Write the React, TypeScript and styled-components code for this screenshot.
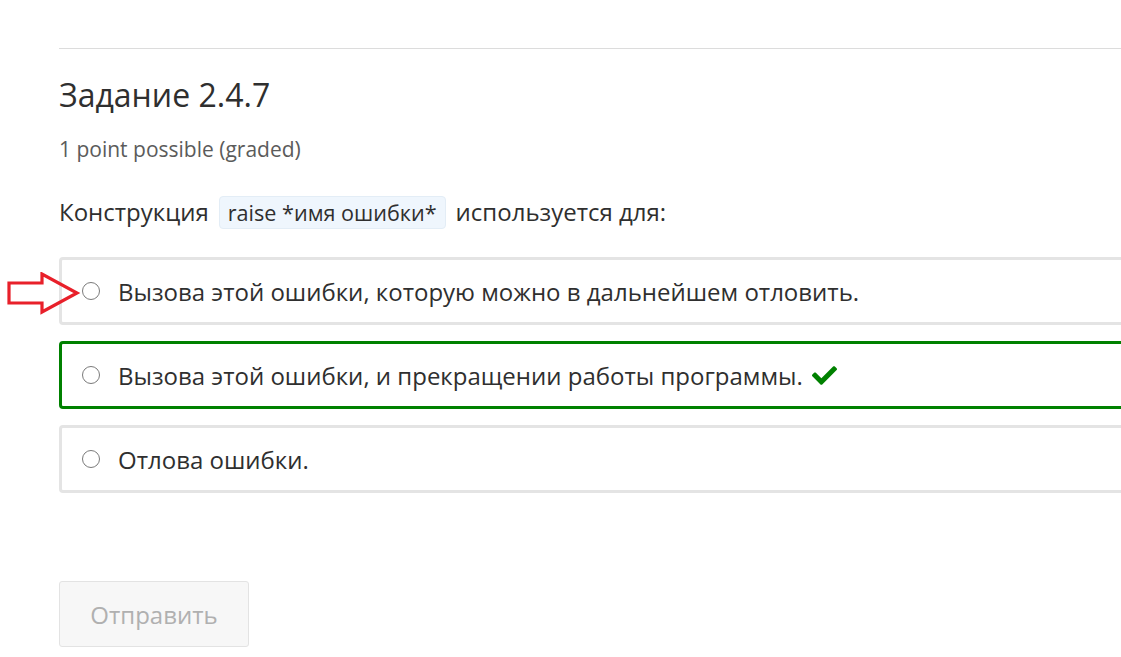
import React from "react";
import styled, { createGlobalStyle } from "styled-components";
import { FaCheck } from "react-icons/fa";

const Global = createGlobalStyle`
  html, body { margin: 0; padding: 0; background: #fff; overflow: hidden; }
  body { font-family: "Open Sans", "Noto Sans", sans-serif; color: #2f2f2f; }
`;

const Page = styled.div`
  width: 1121px;
  height: 657px;
  overflow: hidden;
  position: relative;
  padding-left: 59px;
  box-sizing: border-box;
`;

const Content = styled.div`
  width: 1120px;
  padding-top: 48px;
`;

const Rule = styled.hr`
  margin: 0;
  border: 0;
  border-top: 1px solid #dcdcdc;
`;

const Title = styled.h2`
  margin: 26px 0 0;
  font-size: 32px;
  font-weight: 400;
  line-height: 40px;
  color: #2f2f2f;
`;

const Meta = styled.div`
  margin-top: 20px;
  font-size: 21px;
  line-height: 28px;
  color: #5b5b5b;
`;

const Question = styled.p`
  margin: 32px 0 0;
  font-size: 24px;
  line-height: 34px;
  display: flex;
  align-items: center;
  gap: 10px;
`;

const Code = styled.span`
  display: inline-block;
  background: #eff6fd;
  border: 1px solid #e3edf6;
  border-radius: 4px;
  padding: 0 8px;
  line-height: 31px;
  font-size: 21.6px;
`;

const Options = styled.div`
  margin-top: 28px;
  display: flex;
  flex-direction: column;
  gap: 16px;
  position: relative;
`;

const Option = styled.label<{ $correct?: boolean }>`
  display: flex;
  align-items: center;
  height: 68px;
  box-sizing: border-box;
  border: ${(p) => (p.$correct ? "3px solid #008100" : "3px solid #e4e4e4")};
  border-radius: 4px;
  padding-left: 20px;
  font-size: 24px;
  color: #2f2f2f;
`;

const Radio = styled.span`
  width: 18px;
  height: 18px;
  box-sizing: border-box;
  border-radius: 50%;
  border: 1px solid #7a7a7a;
  background: #fff;
  flex: none;
  margin-right: 18px;
`;

const Check = styled(FaCheck)`
  color: #008100;
  margin-left: 9px;
  font-size: 25px;
`;

const Arrow = styled.svg`
  position: absolute;
  left: -52px;
  top: 15px;
`;

const Submit = styled.button`
  margin-top: 88px;
  width: 190px;
  height: 66px;
  background: #f7f7f7;
  border: 1px solid #e3e3e3;
  border-radius: 3px;
  color: #b0b0b0;
  font-family: "Open Sans", sans-serif;
  font-size: 24px;
`;

export default function App() {
  return (
    <Page>
      <Global />
      <Content>
        <Rule />
        <Title>Задание 2.4.7</Title>
        <Meta>1 point possible (graded)</Meta>
        <Question>
          Конструкция <Code>raise *имя ошибки*</Code> используется для:
        </Question>
        <Options>
          <Arrow width="74" height="44" viewBox="0 0 74 44">
            <path
              d="M2 11 L35 11 L35 2 L70 21 L35 40 L35 31 L2 31 Z"
              fill="none"
              stroke="#e8202a"
              strokeWidth="3.2"
              strokeLinejoin="miter"
            />
          </Arrow>
          <Option>
            <Radio />
            Вызова этой ошибки, которую можно в дальнейшем отловить.
          </Option>
          <Option $correct>
            <Radio />
            Вызова этой ошибки, и прекращении работы программы.
            <Check />
          </Option>
          <Option>
            <Radio />
            Отлова ошибки.
          </Option>
        </Options>
        <Submit disabled>Отправить</Submit>
      </Content>
    </Page>
  );
}
